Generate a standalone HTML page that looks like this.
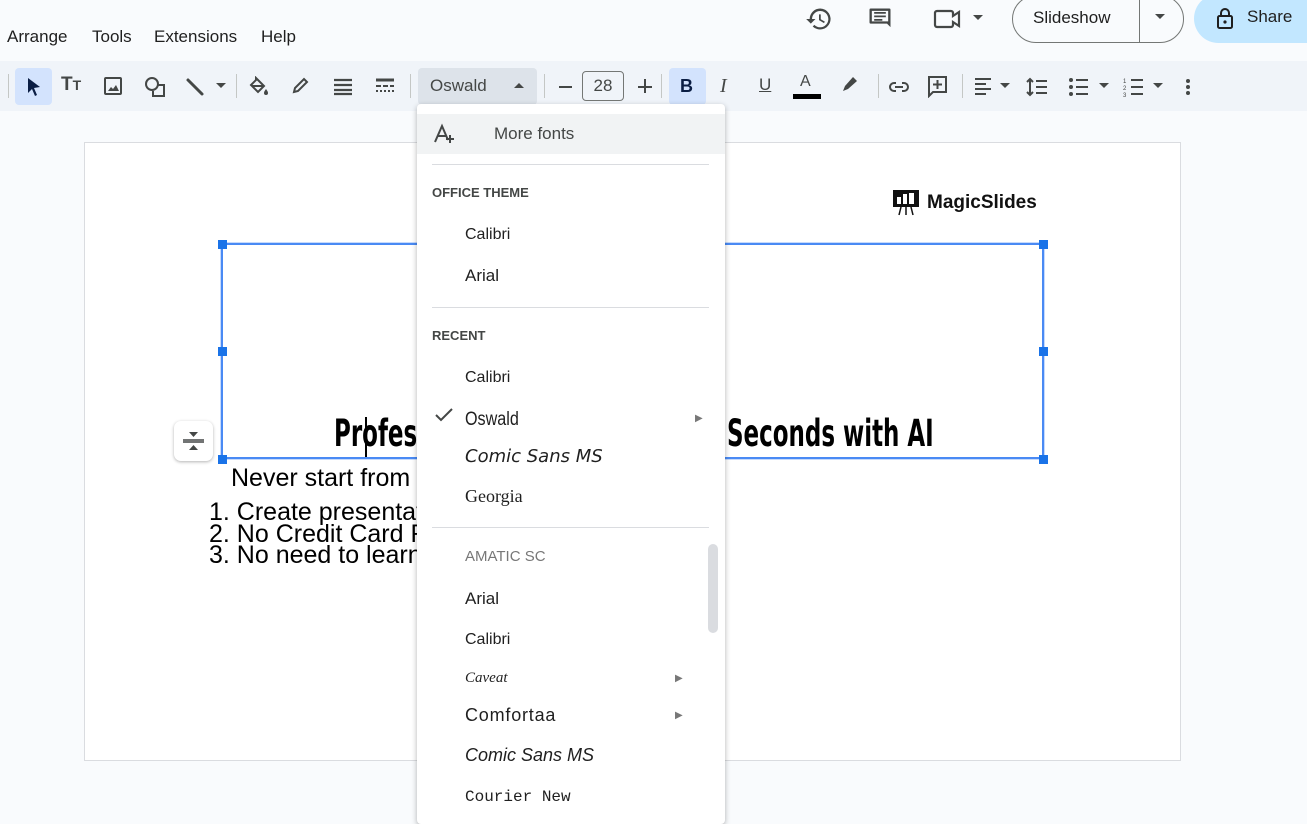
<!DOCTYPE html>
<html><head><meta charset="utf-8"><style>
*{box-sizing:border-box;margin:0;padding:0}
body{width:1307px;height:815px;overflow:hidden;background:#f9fbfd;font-family:"Liberation Sans",Arial,sans-serif;position:relative;color:#1f1f1f}
.abs{position:absolute}
.menu span{position:absolute;top:27px;font-size:17px;color:#1f1f1f}
.tb{position:absolute;left:0;top:61px;width:1307px;height:50px;background:#f0f4f9}
.ic{position:absolute;top:76px}
.sep{position:absolute;top:74px;width:1px;height:24px;background:#c4c7c5}
.slide{position:absolute;left:84px;top:142px;width:1097px;height:619px;background:#fff;border:1px solid #dadce0}
.dd{position:absolute;left:417px;top:104px;width:308px;height:720px;background:#fff;box-shadow:0 2px 6px rgba(0,0,0,.3);border-radius:4px}
.dd .it{position:absolute;left:48px;font-size:17px;color:#1f1f1f}
.dd .hd{position:absolute;left:15px;font-size:13px;font-weight:bold;color:#444746}
.dd .hr{position:absolute;left:15px;width:277px;height:1px;background:#dadce0}
.tri{position:absolute;font-size:10px;color:#777}
.h{position:absolute;width:9px;height:9px;background:#1a73e8}
.ttl{position:absolute;top:412px;font-size:37px;font-weight:bold;font-family:'Liberation Sans Narrow','DejaVu Sans Condensed',sans-serif;color:#000;transform:scaleX(.69);transform-origin:left;white-space:nowrap}
</style></head><body>
<div class="menu"><span style="left:7px">Arrange</span><span style="left:92px">Tools</span><span style="left:154px">Extensions</span><span style="left:261px">Help</span></div>

<svg class="abs" style="left:805px;top:5px" width="28" height="28" viewBox="0 0 24 24"><path d="M13 3a9 9 0 0 0-9 9H1l4 4 4-4H6a7 7 0 1 1 2 5l-1.4 1.4A9 9 0 1 0 13 3zm-1 5v5l4.3 2.5.7-1.2-3.5-2.1V8z" fill="#444746"/></svg>
<svg class="abs" style="left:866px;top:5px" width="28" height="28" viewBox="0 0 24 24"><path d="M4 3h16a1 1 0 0 1 1 1v15l-3-3H4a1 1 0 0 1-1-1V4a1 1 0 0 1 1-1zm1 2v9h14V5zm2 1h10v1.5H7zm0 3h10v1.5H7zm0 3h7v1.5H7z" fill="#444746"/></svg>
<svg class="abs" style="left:932px;top:6px" width="32" height="26" viewBox="0 0 32 26"><path d="M5 5h14a2 2 0 0 1 2 2v3l6-4v14l-6-4v3a2 2 0 0 1-2 2H5a2 2 0 0 1-2-2V7a2 2 0 0 1 2-2z" fill="none" stroke="#444746" stroke-width="2.2"/></svg>
<div class="abs" style="left:973px;top:15px;border:5px solid transparent;border-top:5px solid #444746"></div>
<div class="abs" style="left:1012px;top:-5px;width:172px;height:48px;border:1px solid #747775;border-radius:24px"></div>
<div class="abs" style="left:1139px;top:-5px;width:1px;height:48px;background:#747775"></div>
<span class="abs" style="left:1033px;top:8px;font-size:17px;color:#1f1f1f">Slideshow</span>
<div class="abs" style="left:1155px;top:14px;border:5px solid transparent;border-top:5px solid #444746"></div>
<div class="abs" style="left:1194px;top:-6px;width:140px;height:49px;background:#c2e7ff;border-radius:25px"></div>
<svg class="abs" style="left:1215px;top:6px" width="20" height="24" viewBox="0 0 20 24"><rect x="3" y="10" width="14" height="12" rx="1.5" fill="none" stroke="#1f1f1f" stroke-width="2"/><path d="M6 10V7a4 4 0 0 1 8 0v3" fill="none" stroke="#1f1f1f" stroke-width="2"/><circle cx="10" cy="16" r="1.6" fill="#1f1f1f"/></svg>
<span class="abs" style="left:1247px;top:7px;font-size:17px;color:#1f1f1f">Share</span>

<div class="tb"></div>
<div class="sep" style="left:8px"></div>
<div class="abs" style="left:15px;top:68px;width:37px;height:37px;background:#d3e3fd;border-radius:4px"></div>
<svg class="ic" style="left:24px" width="20" height="22" viewBox="0 0 20 22"><path d="M4 2l12 9-6 1 3 7-2 1-3-7-4 4z" fill="#0b1e44"/></svg>
<span class="ic" style="left:61px;top:74px;font-size:19px;font-weight:bold;color:#444746">T<span style="font-size:14px">T</span></span>
<svg class="ic" style="left:103px" width="20" height="20" viewBox="0 0 20 20"><rect x="2" y="2" width="16" height="16" rx="1" fill="none" stroke="#444746" stroke-width="2"/><path d="M5 15l3-4 2 2 3-4 3 6z" fill="#444746"/></svg>
<svg class="ic" style="left:144px" width="22" height="22" viewBox="0 0 22 22"><circle cx="8" cy="8" r="6" fill="none" stroke="#444746" stroke-width="2"/><path d="M14 9h6v11H9v-5" fill="none" stroke="#444746" stroke-width="2"/></svg>
<svg class="ic" style="left:184px" width="22" height="22" viewBox="0 0 22 22"><path d="M4 4l14 14" stroke="#444746" stroke-width="3" stroke-linecap="round"/></svg>
<div class="abs" style="left:216px;top:83px;border:5px solid transparent;border-top:5px solid #444746"></div>
<div class="sep" style="left:236px"></div>
<svg class="ic" style="left:248px" width="22" height="22" viewBox="0 0 22 22"><path d="M8 2l8 8-6 6-7-7 5-5zM4 10h11" fill="none" stroke="#444746" stroke-width="2"/><path d="M18 13c1.5 2 2 3 2 4a2 2 0 0 1-4 0c0-1 .5-2 2-4z" fill="#444746"/></svg>
<svg class="ic" style="left:290px" width="20" height="20" viewBox="0 0 20 20"><path d="M4 16l1-4 9-9 3 3-9 9z" fill="none" stroke="#444746" stroke-width="2"/></svg>
<svg class="ic" style="left:333px" width="20" height="20" viewBox="0 0 20 20"><path d="M1 4h18M1 9h18M1 14h18M1 18h18" stroke="#444746" stroke-width="2.2"/></svg>
<svg class="ic" style="left:375px" width="20" height="20" viewBox="0 0 20 20"><path d="M1 4h18" stroke="#444746" stroke-width="3"/><path d="M1 10h5M8 10h5M15 10h4M1 15h2M5 15h2M9 15h2M13 15h2M17 15h2" stroke="#444746" stroke-width="2"/></svg>
<div class="sep" style="left:410px"></div>
<div class="abs" style="left:418px;top:68px;width:119px;height:37px;background:#dde3ea;border-radius:4px"></div>
<span class="abs" style="left:430px;top:76px;font-size:17px;color:#444746">Oswald</span>
<div class="abs" style="left:514px;top:78px;border:5px solid transparent;border-bottom:5px solid #444746"></div>
<div class="sep" style="left:544px"></div>
<div class="abs" style="left:559px;top:86px;width:13px;height:2px;background:#444746"></div>
<div class="abs" style="left:582px;top:71px;width:42px;height:30px;border:1px solid #747775;border-radius:4px;font-size:17px;color:#444746;text-align:center;line-height:28px">28</div>
<div class="abs" style="left:638px;top:86px;width:14px;height:2px;background:#444746"></div>
<div class="abs" style="left:644px;top:79px;width:2px;height:14px;background:#444746"></div>
<div class="sep" style="left:661px"></div>
<div class="abs" style="left:669px;top:68px;width:37px;height:37px;background:#d3e3fd;border-radius:4px"></div>
<span class="abs" style="left:680px;top:76px;font-size:18px;font-weight:bold;color:#0b1e44">B</span>
<span class="abs" style="left:720px;top:75px;font-size:20px;font-style:italic;font-family:'Liberation Serif',serif;color:#444746">I</span>
<span class="abs" style="left:759px;top:75px;font-size:17px;color:#444746;text-decoration:underline">U</span>
<span class="abs" style="left:800px;top:73px;font-size:16px;color:#444746">A</span>
<div class="abs" style="left:793px;top:94px;width:28px;height:5px;background:#000"></div>
<svg class="ic" style="left:840px;top:74px" width="20" height="20" viewBox="0 0 20 20"><path d="M3 17l2-5 8-9 4 4-9 8z" fill="#444746"/></svg>
<div class="sep" style="left:878px"></div>
<svg class="ic" style="left:888px" width="22" height="22" viewBox="0 0 22 22"><path d="M8 7H6a4 4 0 0 0 0 8h2M14 7h2a4 4 0 0 1 0 8h-2M7 11h8" fill="none" stroke="#444746" stroke-width="2"/></svg>
<svg class="ic" style="left:926px;top:74px" width="24" height="24" viewBox="0 0 24 24"><path d="M3 3h17v15H7l-4 4z" fill="none" stroke="#444746" stroke-width="2"/><path d="M11.5 6v9M7 10.5h9" stroke="#444746" stroke-width="2"/></svg>
<div class="sep" style="left:962px"></div>
<svg class="ic" style="left:974px" width="20" height="20" viewBox="0 0 20 20"><path d="M1 3h16M1 8h11M1 13h16M1 18h11" stroke="#444746" stroke-width="2"/></svg>
<div class="abs" style="left:1000px;top:83px;border:5px solid transparent;border-top:5px solid #444746"></div>
<svg class="ic" style="left:1025px" width="24" height="22" viewBox="0 0 24 22"><path d="M5 3v16M2 6l3-3 3 3M2 16l3 3 3-3M11 5h11M11 11h11M11 17h11" fill="none" stroke="#444746" stroke-width="2"/></svg>
<svg class="ic" style="left:1068px" width="22" height="22" viewBox="0 0 22 22"><circle cx="3" cy="4" r="2" fill="#444746"/><circle cx="3" cy="11" r="2" fill="#444746"/><circle cx="3" cy="18" r="2" fill="#444746"/><path d="M8 4h12M8 11h12M8 18h12" stroke="#444746" stroke-width="2"/></svg>
<div class="abs" style="left:1099px;top:83px;border:5px solid transparent;border-top:5px solid #444746"></div>
<svg class="ic" style="left:1122px" width="22" height="22" viewBox="0 0 22 22"><path d="M9 4h12M9 11h12M9 18h12" stroke="#444746" stroke-width="2"/><text x="1" y="7" font-size="6" fill="#444746">1</text><text x="1" y="14" font-size="6" fill="#444746">2</text><text x="1" y="21" font-size="6" fill="#444746">3</text></svg>
<div class="abs" style="left:1153px;top:83px;border:5px solid transparent;border-top:5px solid #444746"></div>
<div class="abs" style="left:1186px;top:79px;width:4px;height:4px;border-radius:2px;background:#444746;box-shadow:0 6px 0 #444746,0 12px 0 #444746"></div>

<div class="slide"></div>
<svg class="abs" style="left:893px;top:190px" width="26" height="26" viewBox="0 0 26 26"><rect x="0" y="0" width="26" height="17" fill="#111"/><rect x="4" y="7" width="4" height="7" fill="#fff"/><rect x="10" y="4" width="4" height="10" fill="#fff"/><rect x="16" y="3" width="5" height="11" fill="#fff"/><path d="M8 17l-2 8M13 17v8M18 17l2 8" stroke="#111" stroke-width="1.5"/></svg>
<span class="abs" style="left:927px;top:192px;font-size:19px;font-weight:bold;color:#111">MagicSlides</span>
<div class="abs" style="left:221px;top:243px;width:823px;height:216px;border:2px solid #4a8af4;box-shadow:0 0 0 1px #c6dafc"></div>
<div class="h" style="left:218px;top:240px"></div><div class="h" style="left:1039px;top:240px"></div>
<div class="h" style="left:218px;top:347px"></div><div class="h" style="left:1039px;top:347px"></div>
<div class="h" style="left:218px;top:455px"></div><div class="h" style="left:1039px;top:455px"></div>
<span class="ttl" style="left:334px">Profes</span>
<div class="abs" style="left:365px;top:417px;width:2px;height:40px;background:#000"></div>
<span class="ttl" style="left:727px">Seconds with AI</span>
<div class="abs" style="left:174px;top:421px;width:39px;height:40px;background:#fff;border-radius:7px;box-shadow:0 1px 3px rgba(0,0,0,.3)"></div>
<svg class="abs" style="left:182px;top:428px" width="23" height="26" viewBox="0 0 23 26"><path d="M1 12h21M1 14h21" stroke="#444746" stroke-width="1.6"/><path d="M7 4h9l-4.5 5zM7 22h9l-4.5-5z" fill="#444746"/></svg>
<span class="abs" style="left:231px;top:464px;font-size:25px;color:#000;white-space:nowrap">Never start from</span>
<div class="abs" style="left:209px;top:502px;font-size:25px;line-height:21.5px;color:#000;white-space:nowrap">1. Create presentat<br>2. No Credit Card R<br>3. No need to learn</div>

<div class="dd">
<div class="abs" style="left:0;top:10px;width:308px;height:40px;background:#f1f3f4"></div>
<svg class="abs" style="left:16px;top:19px" width="22" height="22" viewBox="0 0 22 22"><path d="M2 19L9 3l6 14M5 13h8" fill="none" stroke="#444746" stroke-width="2"/><path d="M17 12v8M13 16h8" stroke="#444746" stroke-width="2"/></svg>
<span class="abs" style="left:77px;top:20px;font-size:17px;color:#444746">More fonts</span>
<div class="hr" style="top:60px"></div>
<span class="hd" style="top:81px">OFFICE THEME</span>
<span class="it" style="top:122px;font-size:16px">Calibri</span>
<span class="it" style="top:162px">Arial</span>
<div class="hr" style="top:203px"></div>
<span class="hd" style="top:224px">RECENT</span>
<span class="it" style="top:265px;font-size:16px">Calibri</span>
<svg class="abs" style="left:18px;top:304px" width="18" height="14" viewBox="0 0 18 14"><path d="M1 7l5 5L17 1" fill="none" stroke="#444746" stroke-width="2"/></svg>
<span class="it" style="top:305px;font-size:19px;font-family:'Liberation Sans Narrow',sans-serif;transform:scaleX(.85);transform-origin:left">Oswald</span>
<span class="tri" style="left:278px;top:309px">▶</span>
<span class="it" style="top:342px;font-size:18px;font-family:'Comic Sans MS','DejaVu Sans',sans-serif;font-style:italic">Comic Sans MS</span>
<span class="it" style="top:382px;font-family:'Liberation Serif',serif;font-size:18px">Georgia</span>
<div class="hr" style="top:423px"></div>
<span class="it" style="top:444px;font-size:15px;color:#777;font-family:'Liberation Sans Narrow',sans-serif">AMATIC SC</span>
<span class="it" style="top:485px">Arial</span>
<span class="it" style="top:527px;font-size:16px">Calibri</span>
<span class="it" style="top:566px;font-size:15px;font-style:italic;font-family:'Liberation Serif',serif">Caveat</span>
<span class="tri" style="left:258px;top:569px">▶</span>
<span class="it" style="top:601px;font-size:18px;letter-spacing:.8px">Comfortaa</span>
<span class="tri" style="left:258px;top:606px">▶</span>
<span class="it" style="top:641px;font-size:18px;font-style:italic">Comic Sans MS</span>
<span class="it" style="top:684px;font-size:16px;font-family:'Liberation Mono',monospace">Courier New</span>
<div class="abs" style="left:291px;top:440px;width:10px;height:89px;background:#dadce0;border-radius:5px"></div>
</div>
</body></html>
